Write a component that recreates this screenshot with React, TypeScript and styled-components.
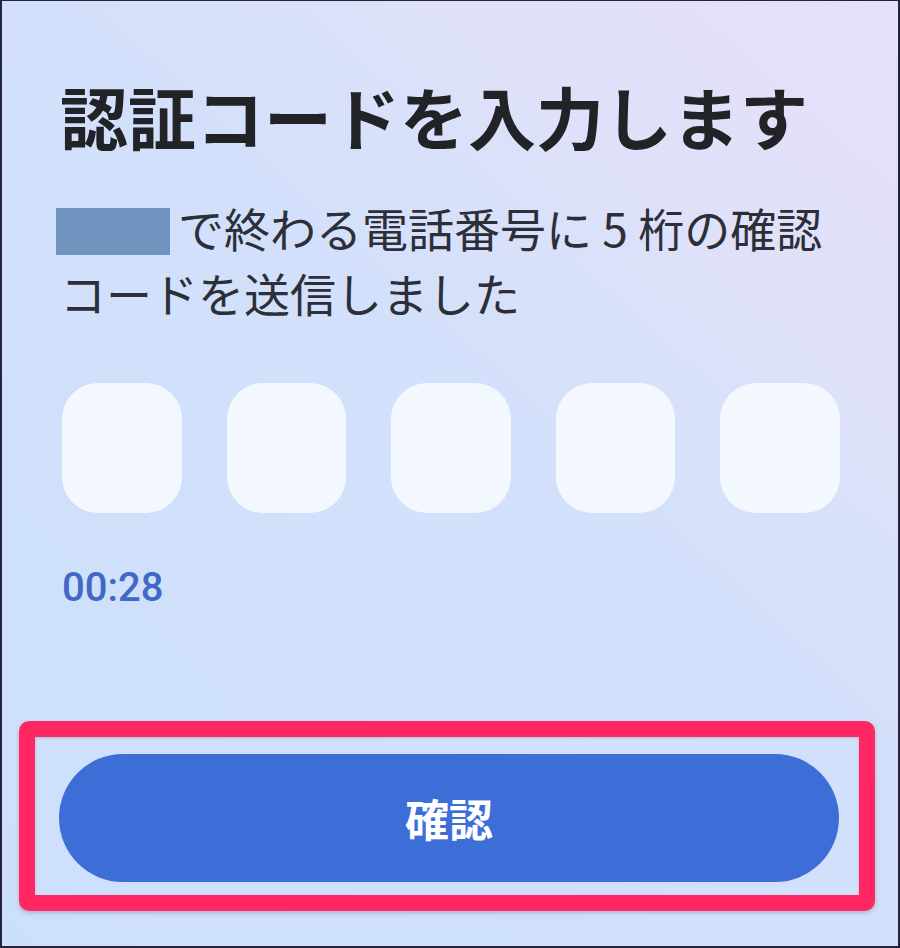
import styled, { createGlobalStyle } from "styled-components";

const GlobalStyle = createGlobalStyle`
  html, body {
    margin: 0;
    padding: 0;
  }
  body {
    font-family: "Noto Sans CJK JP", "Noto Sans", sans-serif;
  }
`;

export default function App() {
  return (
    <>
      <GlobalStyle />
      <Screen>
        <Title>認証コードを入力します</Title>
        <Lead>
          <Masked />
          で終わる電話番号に 5 桁の確認コードを送信しました
        </Lead>
        <CodeRow>
          {[0, 1, 2, 3, 4].map((i) => (
            <CodeCell key={i} />
          ))}
        </CodeRow>
        <Timer>00:28</Timer>
        <Highlight>
          <ConfirmBtn>確認</ConfirmBtn>
        </Highlight>
      </Screen>
    </>
  );
}

const Screen = styled.div`
  box-sizing: border-box;
  width: 900px;
  height: 948px;
  border: 2px solid #24243f;
  border-top-width: 1px;
  background: linear-gradient(
    222deg,
    #e7e0f9 0%,
    #dee1f9 24%,
    #d2e0fb 46%,
    #cde0fb 100%
  );
  padding: 75px 58px 0 58px;
  display: flex;
  flex-direction: column;
  overflow: hidden;
`;

const Title = styled.h1`
  margin: 0;
  font-size: 68px;
  line-height: 80px;
  font-weight: 700;
  color: #222327;
  white-space: nowrap;
`;

const Lead = styled.p`
  margin: 39px 0 0;
  font-size: 46px;
  line-height: 65px;
  font-weight: 400;
  color: #2c2f38;
  width: 790px;
`;

const Masked = styled.span`
  display: inline-block;
  width: 114px;
  height: 47px;
  margin: 0 8px 0 -4px;
  vertical-align: -8px;
  background: #7093c0;
`;

const CodeRow = styled.div`
  margin-top: 58px;
  display: flex;
  gap: 45px;
  padding-left: 2px;
`;

const CodeCell = styled.div`
  width: 120px;
  height: 130px;
  border-radius: 36px;
  background: #f3f8ff;
`;

const Timer = styled.div`
  margin-top: 51px;
  font-family: Roboto, "Noto Sans", sans-serif;
  font-size: 40px;
  line-height: 48px;
  font-weight: 500;
  color: #4068c4;
  padding-left: 2px;
`;

const Highlight = styled.div`
  margin: 109px 0 0 -41px;
  box-sizing: border-box;
  width: 856px;
  height: 190px;
  border: 16px solid #ff2862;
  border-radius: 10px;
  padding: 17px 18px 0 24px;
  box-shadow: 0 2px 4px rgba(80, 40, 80, 0.25),
    inset 0 1px 3px rgba(80, 40, 80, 0.2);
`;

const ConfirmBtn = styled.button`
  display: flex;
  align-items: center;
  justify-content: center;
  width: 780px;
  height: 128px;
  border: none;
  border-radius: 64px;
  background: #3d6ed8;
  color: #ffffff;
  font-family: "Noto Sans CJK JP", sans-serif;
  font-size: 44px;
  font-weight: 700;
  cursor: pointer;
  padding: 0;
`;
